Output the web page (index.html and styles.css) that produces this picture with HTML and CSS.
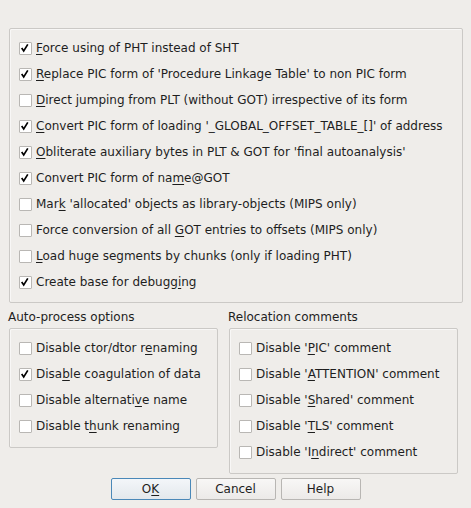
FILE: index.html
```html
<!DOCTYPE html>
<html>
<head>
<meta charset="utf-8">
<link rel="stylesheet" href="styles.css">
</head>
<body>
<div class="dialog">
  <div class="group main">
    <div class="row"><span class="cb on"><svg viewBox="0 0 13 13"><path d="M3 6.8 L5.4 10.4 L10.2 2.6"/></svg></span><span class="lbl"><u>F</u>orce using of PHT instead of SHT</span></div>
    <div class="row"><span class="cb on"><svg viewBox="0 0 13 13"><path d="M3 6.8 L5.4 10.4 L10.2 2.6"/></svg></span><span class="lbl"><u>R</u>eplace PIC form of 'Procedure Linkage Table' to non PIC form</span></div>
    <div class="row"><span class="cb"></span><span class="lbl"><u>D</u>irect jumping from PLT (without GOT) irrespective of its form</span></div>
    <div class="row"><span class="cb on"><svg viewBox="0 0 13 13"><path d="M3 6.8 L5.4 10.4 L10.2 2.6"/></svg></span><span class="lbl"><u>C</u>onvert PIC form of loading '_GLOBAL_OFFSET_TABLE_[]' of address</span></div>
    <div class="row"><span class="cb on"><svg viewBox="0 0 13 13"><path d="M3 6.8 L5.4 10.4 L10.2 2.6"/></svg></span><span class="lbl"><u>O</u>bliterate auxiliary bytes in PLT &amp; GOT for 'final autoanalysis'</span></div>
    <div class="row"><span class="cb on"><svg viewBox="0 0 13 13"><path d="M3 6.8 L5.4 10.4 L10.2 2.6"/></svg></span><span class="lbl">Convert PIC form of na<u>m</u>e@GOT</span></div>
    <div class="row"><span class="cb"></span><span class="lbl">Mar<u>k</u> 'allocated' objects as library-objects (MIPS only)</span></div>
    <div class="row"><span class="cb"></span><span class="lbl">Force conversion of all <u>G</u>OT entries to offsets (MIPS only)</span></div>
    <div class="row"><span class="cb"></span><span class="lbl"><u>L</u>oad huge segments by chunks (only if loading PHT)</span></div>
    <div class="row"><span class="cb on"><svg viewBox="0 0 13 13"><path d="M3 6.8 L5.4 10.4 L10.2 2.6"/></svg></span><span class="lbl">Create base for debugg<u>i</u>ng</span></div>
  </div>
  <div class="lower">
    <div class="col left">
      <div class="title">Auto-process options</div>
      <div class="group sub">
        <div class="row"><span class="cb"></span><span class="lbl">Disable ctor/dtor r<u>e</u>naming</span></div>
        <div class="row"><span class="cb on"><svg viewBox="0 0 13 13"><path d="M3 6.8 L5.4 10.4 L10.2 2.6"/></svg></span><span class="lbl">Disa<u>b</u>le coagulation of data</span></div>
        <div class="row"><span class="cb"></span><span class="lbl">Disable alternati<u>v</u>e name</span></div>
        <div class="row"><span class="cb"></span><span class="lbl">Disable t<u>h</u>unk renaming</span></div>
      </div>
    </div>
    <div class="col right">
      <div class="title">Relocation comments</div>
      <div class="group sub">
        <div class="row"><span class="cb"></span><span class="lbl">Disable '<u>P</u>IC' comment</span></div>
        <div class="row"><span class="cb"></span><span class="lbl">Disable '<u>A</u>TTENTION' comment</span></div>
        <div class="row"><span class="cb"></span><span class="lbl">Disable '<u>S</u>hared' comment</span></div>
        <div class="row"><span class="cb"></span><span class="lbl">Disable '<u>T</u>LS' comment</span></div>
        <div class="row"><span class="cb"></span><span class="lbl">Disable 'I<u>n</u>direct' comment</span></div>
      </div>
    </div>
  </div>
  <div class="buttons">
    <button class="btn default">O<u>K</u></button>
    <button class="btn">Cancel</button>
    <button class="btn">Help</button>
  </div>
</div>
</body>
</html>
```

FILE: styles.css
```css
html, body {
  margin: 0;
  padding: 0;
  background: #efedea;
}
body {
  width: 471px;
  height: 508px;
  overflow: hidden;
  font-family: "DejaVu Sans", sans-serif;
  font-size: 12px;
  color: #1e1e1e;
}
.dialog {
  padding-top: 28px;
  position: relative;
}
.group {
  border: 1px solid #cbc9c6;
  border-radius: 2px;
  box-shadow: inset 1px 1px 0 rgba(255,255,255,0.55);
  box-sizing: border-box;
}
.main {
  margin-left: 9px;
  width: 454px;
  height: 275px;
  padding: 6px 0 6px 9px;
}
.row {
  height: 26px;
  display: flex;
  align-items: center;
}
.cb {
  width: 13px;
  height: 13px;
  box-sizing: border-box;
  border: 1px solid #b9b7b4;
  border-radius: 1px;
  background: #ffffff;
  margin-right: 4px;
  flex: none;
  display: flex;
}
.cb svg {
  width: 11px;
  height: 11px;
}
.cb svg path {
  fill: none;
  stroke: #000;
  stroke-width: 2;
  stroke-linejoin: miter;
  stroke-linecap: butt;
  transform: translate(-1px, -1px);
}
.lbl {
  white-space: nowrap;
  line-height: 14px;
  padding-bottom: 1px;
}
u {
  text-decoration: underline;
  text-underline-offset: 2px;
  text-decoration-thickness: 1px;
}
.lower {
  display: flex;
  margin-top: 7px;
}
.col {
  display: flex;
  flex-direction: column;
}
.left {
  margin-left: 8px;
  width: 210px;
}
.right {
  margin-left: 10px;
  width: 230px;
}
.title {
  height: 14px;
  line-height: 14px;
  margin-bottom: 4px;
  white-space: nowrap;
}
.sub {
  margin-left: 1px;
  padding: 6px 0 7px 9px;
}
.left .sub {
  width: 209px;
  height: 120px;
}
.right .sub {
  width: 229px;
  height: 146px;
}
.buttons {
  display: flex;
  justify-content: center;
  gap: 5px;
  position: absolute;
  top: 478px;
  left: 0;
  width: 471px;
}
.btn {
  width: 80px;
  height: 22px;
  box-sizing: border-box;
  border: 1px solid #b8b6b3;
  border-radius: 2px;
  background: linear-gradient(#f8f7f6, #eceae8);
  font-family: "DejaVu Sans", sans-serif;
  font-size: 12px;
  color: #1e1e1e;
  padding: 0;
  margin: 0;
}
.btn.default {
  border-color: #4a88b8;
  background: linear-gradient(#f3f6f9, #e3e8ec);
}
```
